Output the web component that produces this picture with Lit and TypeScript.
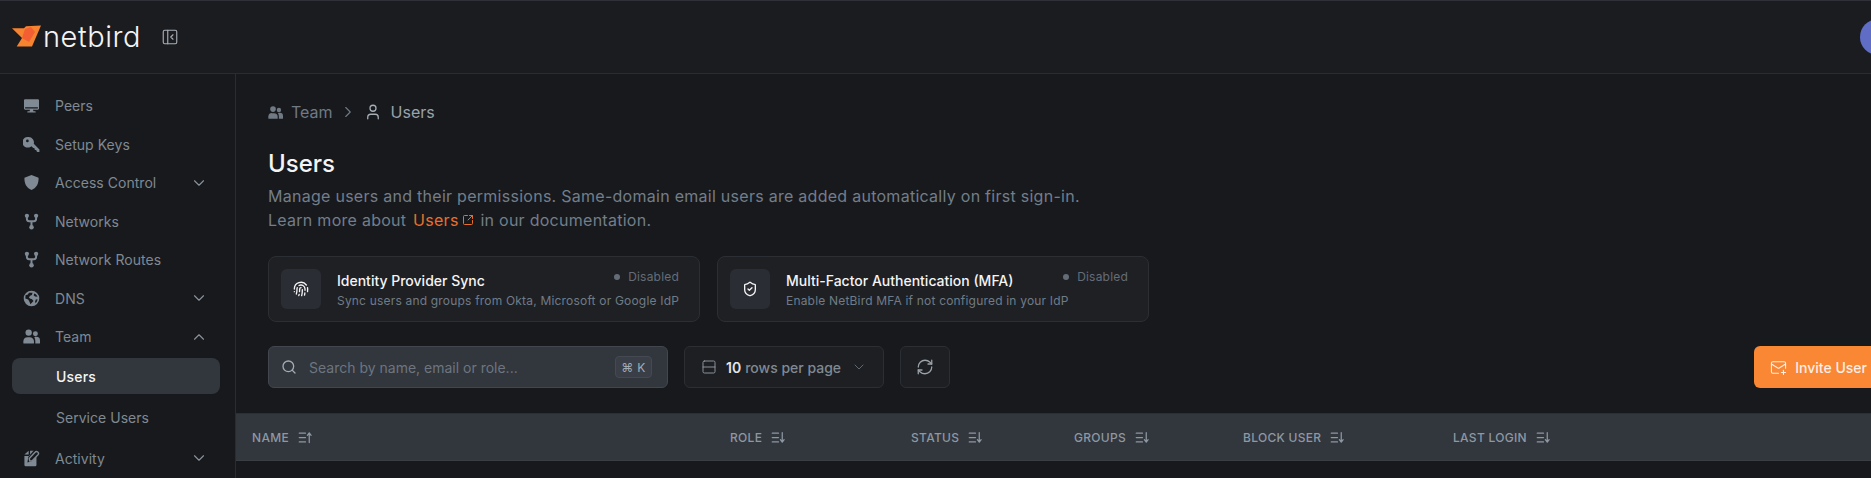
import { LitElement, html, css, svg } from "lit";
import { customElement } from "lit/decorators.js";

const ic = (body: unknown, cls = "", fill = false) => html`<svg class="${cls}" viewBox="0 0 24 24" fill="${fill ? "currentColor" : "none"}" stroke="${fill ? "none" : "currentColor"}" stroke-width="2" stroke-linecap="round" stroke-linejoin="round">${body}</svg>`;

const icons = {
  monitor: svg`<path fill-rule="evenodd" d="M3 3h18a1.600 1.600 0 0 1 1.600 1.600v11.800A1.600 1.600 0 0 1 21 18H14.200l.5 2H17a1 1 0 0 1 0 2H7a1 1 0 0 1 0-2h2.300l.5-2H3a1.600 1.600 0 0 1-1.600-1.600V4.600A1.600 1.600 0 0 1 3 3Zm0 11.500v1.900h18v-1.900Z"/>`,
  key: svg`<path fill-rule="evenodd" d="M8 1.500a7.500 7.500 0 0 1 7.200 9.500l8 8v3.500h-3l-1.300-1.300v-1.600h-1.700l-1-1v-1.700h-1.700l-2.600-2.600A7.500 7.500 0 1 1 8 1.500Zm-1.800 3.600a1.900 1.900 0 1 0 0 3.800 1.900 1.900 0 0 0 0-3.800Z"/>`,
  shield: svg`<path d="M12 1.500 22 5.200c.2 8-2.500 14-10 17.300C4.500 19.200 1.800 13.200 2 5.200Z"/>`,
  fork: svg`<g fill="none" stroke="currentColor" stroke-width="2.800"><path d="M5.500 6v2.500a3 3 0 0 0 3 3h7a3 3 0 0 0 3-3V6M12 11.500V19"/></g><circle cx="5.500" cy="4" r="3"/><circle cx="18.500" cy="4" r="3"/><circle cx="12" cy="20" r="3.200"/>`,
  globe: svg`<path fill-rule="evenodd" d="M12 1a11 11 0 1 1 0 22 11 11 0 0 1 0-22ZM8.500 3.800 6.800 6.500l-3.200.8L3.300 12l4 1.500 2 3.500 1.200 3.200 2.300-2.700 2-2-2-2.500-3-1-1.500-1.500L10 8l2.500-1 1-3.200ZM16 5l-1 2.500 2 1.500 3.500.5C19.800 7.600 18 5.800 16 5Zm4.500 8-2.500.5-1 3 1 2.300A9 9 0 0 0 20.500 13Z"/>`,
  users: svg`<circle cx="8" cy="6.500" r="4.500"/><path d="M0.500 21v-2.500A6 6 0 0 1 6.500 13h3a6 6 0 0 1 6 6v2a1 1 0 0 1-1 1H1.500a1 1 0 0 1-1-1Z"/><circle cx="17.500" cy="8" r="3.500"/><path d="M16 13.200c1-.5 1.500-.7 3-.7a5 5 0 0 1 5 5V21a1 1 0 0 1-1 1h-5.600v-3.500c0-2-.6-3.800-1.400-5.300Z"/>`,
  activity: svg`<path d="M2 6.500 8 1v5.500Zm0 2h8v-7.500h5l-1.500 1.500-6 7.500-1.300 7.500 7.500-2.500 5.300-6V21a2 2 0 0 1-2 2H4a2 2 0 0 1-2-2Z"/><path fill="none" stroke="currentColor" stroke-width="2" d="M9.500 15.500 8.800 12 17 3.200a2.700 2.700 0 0 1 4.200 3.400L13 15Z"/>`,
  chevronDown: svg`<path d="m6 9 6 6 6-6"/>`,
  chevronUp: svg`<path d="m18 15-6-6-6 6"/>`,
  chevronRight: svg`<path d="m9 18 6-6-6-6"/>`,
  user: svg`<path d="M19 21v-2a4 4 0 0 0-4-4H9a4 4 0 0 0-4 4v2"/><circle cx="12" cy="7" r="4"/>`,
  ext: svg`<path d="M21 13v6a2 2 0 0 1-2 2H5a2 2 0 0 1-2-2V5a2 2 0 0 1 2-2h6"/><path d="m21 3-9 9"/><path d="M15 3h6v6"/>`,
  finger: svg`<path d="M12 10a2 2 0 0 0-2 2c0 1.020-.1 2.510-.26 4"/><path d="M14 13.120c0 2.380 0 6.380-1 8.880"/><path d="M17.290 21.020c.12-.6.43-2.300.5-3.020"/><path d="M2 12a10 10 0 0 1 18-6"/><path d="M2 16h.01"/><path d="M21.800 16c.2-2 .131-5.354 0-6"/><path d="M5 19.500C5.500 18 6 15 6 12a6 6 0 0 1 .34-2"/><path d="M8.650 22c.21-.66.45-1.320.57-2"/><path d="M9 6.800a6 6 0 0 1 9 5.200v2"/>`,
  shieldCheck: svg`<path d="M20 13c0 5-3.500 7.500-7.660 8.950a1 1 0 0 1-.67-.01C7.500 20.500 4 18 4 13V6a1 1 0 0 1 1-1c2 0 4.500-1.200 6.240-2.720a1.170 1.170 0 0 1 1.520 0C14.510 3.810 17 5 19 5a1 1 0 0 1 1 1z"/><path d="m9 12 2 2 4-4"/>`,
  search: svg`<circle cx="11" cy="11" r="8"/><path d="m21 21-4.300-4.300"/>`,
  rows: svg`<rect x="3" y="3" width="18" height="18" rx="2"/><path d="M3 12h18"/>`,
  refresh: svg`<path d="M3 12a9 9 0 0 1 9-9 9.750 9.750 0 0 1 6.740 2.740L21 8"/><path d="M21 3v5h-5"/><path d="M21 12a9 9 0 0 1-9 9 9.750 9.750 0 0 1-6.740-2.740L3 16"/><path d="M8 16H3v5"/>`,
  mail: svg`<path d="M22 13V6a2 2 0 0 0-2-2H4a2 2 0 0 0-2 2v12c0 1.100.9 2 2 2h8"/><path d="m22 7-8.970 5.700a1.940 1.940 0 0 1-2.060 0L2 7"/><path d="M19 16v6"/><path d="M16 19h6"/>`,
  panel: svg`<rect x="3" y="3" width="18" height="18" rx="2"/><path d="M9 3v18"/><path d="m16 15-3-3 3-3"/>`,
  sortUp: svg`<path d="M2 5h10M2 12h10M2 19h10"/><path d="M18 20V5M15 8.500 18 4.500 21 8.500"/>`,
  sortDown: svg`<path d="M2 5h10M2 12h10M2 19h10"/><path d="M18 4v15M15 15.500l3 4 3-4"/>`,
};

type NavItem = { label: string; icon: unknown; chevron?: "down" | "up" };
const nav: NavItem[] = [
  { label: "Peers", icon: icons.monitor },
  { label: "Setup Keys", icon: icons.key },
  { label: "Access Control", icon: icons.shield, chevron: "down" },
  { label: "Networks", icon: icons.fork },
  { label: "Network Routes", icon: icons.fork },
  { label: "DNS", icon: icons.globe, chevron: "down" },
  { label: "Team", icon: icons.users, chevron: "up" },
];

const cols = ["Name", "Role", "Status", "Groups", "Block User", "Last Login"];

@customElement("app-root")
export class AppRoot extends LitElement {
  static styles = css`
    :host {
      display: block;
      width: 100%;
      height: 478px;
      overflow: hidden;
      background: #18191d;
      font-family: Inter, "Liberation Sans", sans-serif;
      color: #8a939c;
    }
    .shell { width: 1915px; height: 478px; display: flex; flex-direction: column; }
    svg { display: block; flex: none; }
    header {
      height: 74px;
      flex: none;
      box-sizing: border-box;
      border-top: 1px solid #2e3238;
      border-bottom: 1px solid #2a2c31;
      background: #1b1c20;
      display: flex;
      align-items: center;
      padding: 0 19px 0 12px;
    }
    .bird { width: 30px; height: 23px; margin-top: -1px; }
    .brand { font-size: 29px; font-weight: 300; color: #f4f4f5; margin-left: 1px; letter-spacing: 0.55px; line-height: 36px; }
    .collapse { width: 18px; height: 18px; color: #a9afb6; margin-left: 20px; stroke-width: 1.500; }
    .avatar { margin-left: auto; width: 36px; height: 36px; border-radius: 50%; background: #5f6ec4; }
    .body { display: flex; flex: 1; min-height: 0; }
    aside { width: 236px; flex: none; box-sizing: border-box; border-right: 1px solid #2a2c31; padding-top: 12.400px; }
    .row {
      height: 38.500px;
      display: flex;
      align-items: center;
      font-size: 14px;
      letter-spacing: 0.03px;
      color: #7f8992;
    }
    .row .ico { width: 17px; height: 17px; margin-left: 22.500px; margin-right: 15.500px; color: #7f8a94; }
    .row .chev { width: 18px; height: 18px; margin-left: auto; margin-right: 27px; color: #8a939c; stroke-width: 1.500; }
    .sub { height: 36px; display: flex; align-items: center; margin: 0 15px 3.500px 12px; padding-left: 44px; font-size: 14px; letter-spacing: 0.03px; color: #7f8992; border-radius: 8px; }
    .sub.first { margin-top: 2.600px; }
    .sub.active { background: #32363d; color: #f4f4f5; font-weight: 500; letter-spacing: 0.2px; margin-bottom: 5px; }
    main { flex: 1; min-width: 0; display: flex; flex-direction: column; }
    .content { padding: 28px 32px 0; }
    .crumb { height: 20px; display: flex; align-items: center; font-size: 16px; color: #6f7a85; }
    .crumb .c-ico { width: 15px; height: 15px; margin-right: 8px; color: #6f7a85; }
    .crumb .sep { width: 18px; height: 18px; margin: 0 7px 0 6px; color: #6f7a85; stroke-width: 1.500; }
    .crumb .u-ico { width: 18px; height: 18px; margin-right: 9px; color: #a7afb7; stroke-width: 1.700; }
    .crumb .cur { color: #99a3ac; }
    h1 { margin: 26px 0 0; font-size: 24px; line-height: 32px; font-weight: 500; color: #f4f4f5; }
    .desc { margin: 4px 0 0; font-size: 16px; line-height: 24px; letter-spacing: 0.27px; color: #727e8a; }
    .desc a { color: #e8702a; text-decoration: none; display: inline-flex; align-items: center; gap: 3px; margin: 0 2px 0 2px; }
    .desc a svg { width: 12px; height: 12px; }
    .cards { display: flex; gap: 17px; margin-top: 24px; }
    .card { width: 432px; height: 66px; box-sizing: border-box; border: 1px solid #2b2e33; border-radius: 8px; background: #1f2024; display: flex; align-items: center; padding: 0 20px 0 12px; gap: 16px; }
    .card .box { width: 40px; height: 40px; border-radius: 6px; background: #2a2d33; display: flex; align-items: center; justify-content: center; color: #f4f4f5; }
    .card .box svg { width: 16px; height: 16px; }
    .card .txt { flex: 1; min-width: 0; padding-top: 2px; }
    .card .top { display: flex; justify-content: space-between; align-items: flex-start; }
    .card .title { font-size: 14px; line-height: 20px; font-weight: 500; color: #f4f4f5; }
    .card .status { display: flex; align-items: center; gap: 8px; font-size: 12px; line-height: 16px; letter-spacing: 0.2px; color: #646d77; margin-top: -2px; }
    .card .dot { width: 6px; height: 6px; border-radius: 50%; background: #646d77; }
    .card .sub-t { font-size: 12px; line-height: 16px; letter-spacing: 0.19px; color: #6f7c88; margin-top: 2px; white-space: nowrap; }
    .toolbar { display: flex; gap: 16px; margin-top: 24px; height: 42px; }
    .search { width: 400px; box-sizing: border-box; border: 1px solid #41464f; border-radius: 6px; background: #32363d; display: flex; align-items: center; padding: 0 15px 0 12px; font-size: 14px; color: #6c7580; }
    .search svg { width: 16px; height: 16px; color: #a3abb3; margin-right: 12px; }
    .search kbd { margin-left: auto; width: 37px; height: 22px; box-sizing: border-box; border: 1px solid #444952; background: #3a3f47; border-radius: 4px; display: flex; align-items: center; justify-content: center; font-family: Inter, "DejaVu Sans", sans-serif; font-size: 12px; color: #a3abb3; letter-spacing: 0.3px; }
    .btn { box-sizing: border-box; border: 1px solid #2b2e33; border-radius: 6px; background: #1e1f23; display: flex; align-items: center; }
    .rowsel { width: 200px; padding: 0 0 0 16px; font-size: 14px; font-weight: 500; color: #7f8a94; }
    .rowsel .a { width: 16px; height: 16px; color: #8a939c; margin-right: 9px; stroke-width: 1.500; }
    .rowsel b { font-weight: 600; color: #e4e4e7; margin-right: 4px; }
    .rowsel .b { width: 16px; height: 16px; margin-left: 10px; color: #5f6872; stroke-width: 1.500; }
    .refresh { width: 50px; justify-content: center; color: #9aa2aa; }
    .refresh svg { width: 18px; height: 18px; stroke-width: 1.700; }
    .invite { margin-left: auto; border-radius: 6px; background: #f98733; color: #fdeee6; display: flex; align-items: center; padding: 0 16px; gap: 8px; font-size: 14px; font-weight: 500; }
    .invite svg { width: 17px; height: 17px; stroke-width: 1.500; }
    .thead { margin-top: 25px; height: 48px; box-sizing: border-box; background: #32363d; border-top: 1px solid #2c2f35; border-bottom: 1px solid #3a3e45; display: grid; grid-template-columns: 478px 181px 163px 169px 210px 1fr; padding-left: 16px; align-items: center; font-size: 12px; font-weight: 500; letter-spacing: 0.3px; text-transform: uppercase; color: #8d98a3; }
    .thead div { display: flex; align-items: center; gap: 9px; }
    .thead svg { width: 15px; height: 15px; color: #8d98a3; }
    .below { flex: 1; background: #17191c; }
  `;

  render() {
    return html`<div class="shell">
      <header>
        <svg class="bird" viewBox="0 0 30 23">
          <path fill="#f68330" d="M0 3.300h12l2-2 15-.8-9 21H4.700L10 13Z"/>
          <path fill="#f35e32" d="M13 4 19 2l4 5-6 10-7-4Z"/>
        </svg>
        <span class="brand">netbird</span>
        ${ic(icons.panel, "collapse")}
        <div class="avatar"></div>
      </header>
      <div class="body">
        <aside>
          ${nav.map(n => html`<div class="row">${ic(n.icon, "ico", true)}<span>${n.label}</span>${n.chevron ? ic(n.chevron === "up" ? icons.chevronUp : icons.chevronDown, "chev") : ""}</div>`)}
          <div class="sub first active">Users</div>
          <div class="sub">Service Users</div>
          <div class="row">${ic(icons.activity, "ico", true)}<span>Activity</span>${ic(icons.chevronDown, "chev")}</div>
        </aside>
        <main>
          <div class="content">
            <div class="crumb">
              ${ic(icons.users, "c-ico", true)}<span>Team</span>
              ${ic(icons.chevronRight, "sep")}
              ${ic(icons.user, "u-ico")}<span class="cur">Users</span>
            </div>
            <h1>Users</h1>
            <p class="desc">Manage users and their permissions. Same-domain email users are added automatically on first sign-in.<br>Learn more about <a href="#">Users${ic(icons.ext)}</a> in our documentation.</p>
            <div class="cards">
              <div class="card">
                <div class="box">${ic(icons.finger)}</div>
                <div class="txt">
                  <div class="top"><span class="title">Identity Provider Sync</span><span class="status"><i class="dot"></i>Disabled</span></div>
                  <div class="sub-t">Sync users and groups from Okta, Microsoft or Google IdP</div>
                </div>
              </div>
              <div class="card">
                <div class="box">${ic(icons.shieldCheck)}</div>
                <div class="txt">
                  <div class="top"><span class="title">Multi-Factor Authentication (MFA)</span><span class="status"><i class="dot"></i>Disabled</span></div>
                  <div class="sub-t">Enable NetBird MFA if not configured in your IdP</div>
                </div>
              </div>
            </div>
            <div class="toolbar">
              <div class="search">${ic(icons.search)}<span>Search by name, email or role...</span><kbd>⌘ K</kbd></div>
              <div class="btn rowsel">${ic(icons.rows, "a")}<b>10</b><span>rows per page</span>${ic(icons.chevronDown, "b")}</div>
              <div class="btn refresh">${ic(icons.refresh)}</div>
              <div class="invite">${ic(icons.mail)}<span>Invite User</span></div>
            </div>
          </div>
          <div class="thead">
            ${cols.map((c, i) => html`<div><span>${c}</span>${ic(i === 0 ? icons.sortUp : icons.sortDown)}</div>`)}
          </div>
          <div class="below"></div>
        </main>
      </div>
    </div>`;
  }
}
